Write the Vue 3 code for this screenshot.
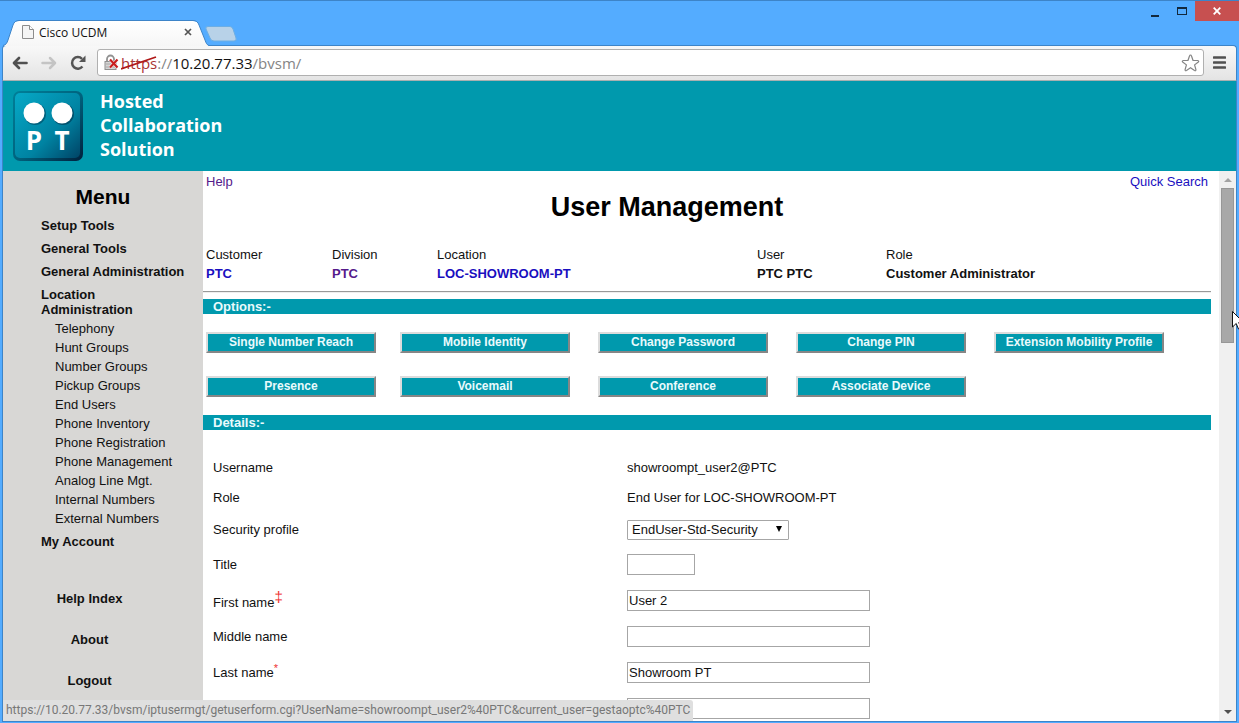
<script setup>
import { ref } from 'vue'

const subItems = [
  'Telephony', 'Hunt Groups', 'Number Groups', 'Pickup Groups', 'End Users',
  'Phone Inventory', 'Phone Registration', 'Phone Management',
  'Analog Line Mgt.', 'Internal Numbers', 'External Numbers',
]
const options = [
  'Single Number Reach', 'Mobile Identity', 'Change Password', 'Change PIN',
  'Extension Mobility Profile', 'Presence', 'Voicemail', 'Conference', 'Associate Device',
]
const url = ref('')
const profile = ref('EndUser-Std-Security')
const title = ref('')
const firstName = ref('User 2')
const middleName = ref('')
const lastName = ref('Showroom PT')
const extra = ref('')
</script>

<template>
  <div class="window">
    <header class="titlebar">
      <div class="tab">
        <svg class="tab-shape" width="206" height="26" viewBox="0 0 206 26">
          <defs>
            <linearGradient id="tabFill" x1="0" y1="0" x2="0" y2="1">
              <stop offset="0" stop-color="#ffffff" />
              <stop offset="1" stop-color="#f6f6f6" />
            </linearGradient>
          </defs>
          <path d="M0 26 C3 25 4 23 5 20 L10 5 C11 2 13 1 16 1 H190 C193 1 195 2 196 5 L202 20 C203 23 204 25 206 26 Z" fill="url(#tabFill)" />
          <path d="M0 25.500 C3 25 4 23 5 20 L10 5 C11 2 13 .5 16 .5 H190 C193 .5 195 2 196 5 L202 20 C203 23 204 25 206 25.500" fill="none" stroke="#3d84c8" />
        </svg>
        <svg class="page-icon" width="12" height="14" viewBox="0 0 12 14">
          <path d="M.5 .5 H7.500 L11.500 4.500 V13.500 H.5 Z" fill="#f4f4f4" stroke="#8c8c8c" />
          <path d="M7.500 .5 V4.500 H11.500" fill="#fff" stroke="#8c8c8c" />
        </svg>
        <span class="tab-title">Cisco UCDM</span>
        <button class="tab-close" type="button" aria-label="Close tab">
          <svg width="8" height="8" viewBox="0 0 8 8"><path d="M1 1 L7 7 M7 1 L1 7" stroke="#555" stroke-width="1.700" /></svg>
        </button>
      </div>
      <button class="new-tab" type="button" aria-label="New tab">
        <svg width="32" height="16" viewBox="0 0 32 16">
          <path d="M3 .5 H25 Q27 .5 28 3 L31 12 Q32 15 29 15 H9 Q6 15 5 12 L1 3 Q0 .5 3 .5 Z" fill="#b8d2e8" stroke="#6daee4" />
        </svg>
      </button>
      <div class="controls">
        <button type="button" aria-label="Minimize"><svg width="8" height="14" viewBox="0 0 8 14"><path d="M0 11 H8 V13 H0 Z" fill="#13293d" /></svg></button>
        <button type="button" aria-label="Maximize"><svg width="10" height="12" viewBox="0 0 10 12"><path d="M0 2 H10 V10 H0 Z M1 4 V9 H9 V4 Z" fill="#13293d" fill-rule="evenodd" /></svg></button>
        <button type="button" class="close" aria-label="Close"><svg width="8" height="8" viewBox="0 0 8 8"><path d="M.7 .7 L7.300 7.300 M7.300 .7 L.7 7.300" stroke="#fff" stroke-width="1.800" /></svg></button>
      </div>
    </header>

    <nav class="toolbar">
      <button class="tool" type="button" aria-label="Back">
        <svg width="16" height="14" viewBox="0 0 16 14"><path d="M14.500 7 H2.500 M7 2 L2 7 L7 12" fill="none" stroke="#505050" stroke-width="2.700" stroke-linecap="round" stroke-linejoin="round" /></svg>
      </button>
      <button class="tool" type="button" aria-label="Forward">
        <svg width="16" height="14" viewBox="0 0 16 14"><path d="M1.500 7 H13.500 M9 2 L14 7 L9 12" fill="none" stroke="#c4c4c4" stroke-width="2.500" stroke-linecap="round" stroke-linejoin="round" /></svg>
      </button>
      <button class="tool" type="button" aria-label="Reload">
        <svg width="16" height="16" viewBox="0 0 16 16"><path d="M12.400 11.500 A5.800 5.800 0 1 1 12 3.800" fill="none" stroke="#555" stroke-width="2.500" /><path d="M15.500 .5 V7 H9 Z" fill="#555" /></svg>
      </button>
      <div class="address">
        <svg class="lock" width="15" height="17" viewBox="0 0 15 17">
          <path d="M3 8 V5 A3.500 3.500 0 0 1 10 5 V8" fill="none" stroke="#929292" stroke-width="1.800" />
          <rect x="1" y="7.500" width="11" height="8" fill="#d5d5d5" stroke="#909090" />
          <path d="M2 10 H11 M2 13 H11" stroke="#aaa" />
          <path d="M6 5.500 L13.500 13.500 M13.500 5.500 L6 13.500" stroke="#fff" stroke-width="3.200" />
          <path d="M6 5.500 L13.500 13.500 M13.500 5.500 L6 13.500" stroke="#c81e1e" stroke-width="2.200" />
        </svg>
        <div class="url-text">
          <span class="scheme">https<svg class="strike" width="36" height="14" viewBox="0 0 36 14"><path d="M0 13 L35 1" stroke="#b01818" stroke-width="1.800" /></svg></span><span>://</span><b>10.20.77.33</b><span>/bvsm/</span>
        </div>
        <input v-model="url" class="url-input" type="text" aria-label="Address">
        <button class="star" type="button" aria-label="Bookmark">
          <svg width="19" height="18" viewBox="0 0 19 18"><path d="M9.500 1 Q10.200 1 10.500 2 L12 6.300 L16.800 6.500 Q18.300 6.900 17.300 8 L13.600 10.900 L14.900 15.600 Q15 17.200 13.500 16.500 L9.500 13.800 L5.500 16.500 Q4 17.200 4.100 15.600 L5.400 10.900 L1.700 8 Q.7 6.900 2.200 6.500 L7 6.300 L8.500 2 Q8.800 1 9.500 1 Z" fill="#fff" stroke="#858585" stroke-width="1.200" /></svg>
        </button>
      </div>
      <button class="menu-btn" type="button" aria-label="Browser menu">
        <svg width="13" height="13" viewBox="0 0 13 13"><path d="M1 1.500 H12 M1 6.500 H12 M1 11.500 H12" stroke="#505050" stroke-width="2.600" stroke-linecap="round" /></svg>
      </button>
    </nav>

    <div class="banner">
      <svg width="70" height="70" viewBox="0 0 70 70" role="img" aria-label="PT">
        <defs>
          <linearGradient id="logoFill" x1="0" y1="0" x2="1" y2="1">
            <stop offset="0" stop-color="#06a8c6" />
            <stop offset=".6" stop-color="#0083a2" />
            <stop offset="1" stop-color="#004466" />
          </linearGradient>
          <linearGradient id="logoEdge" x1="0" y1="0" x2="1" y2="1">
            <stop offset="0" stop-color="#007f98" />
            <stop offset=".5" stop-color="#00647f" />
            <stop offset="1" stop-color="#00203c" />
          </linearGradient>
        </defs>
        <rect x="0" y="0" width="70" height="70" rx="7" fill="url(#logoEdge)" />
        <rect x="2" y="2" width="65" height="65" rx="5" fill="url(#logoFill)" />
        <circle cx="22" cy="23" r="11" fill="#00627e" />
        <circle cx="50" cy="23" r="11" fill="#00526e" />
        <circle cx="21" cy="22" r="10.500" fill="#fff" />
        <circle cx="49" cy="22" r="10.500" fill="#fff" />
        <g class="logo-text" text-anchor="middle">
          <text x="21" y="59" fill="#fff">P</text>
          <text x="49" y="59" fill="#fff">T</text>
        </g>
      </svg>
      <div class="brand">Hosted<br>Collaboration<br>Solution</div>
    </div>

    <div class="page">
      <aside class="sidebar">
        <h2>Menu</h2>
        <ul class="menu">
          <li><a href="#">Setup Tools</a></li>
          <li><a href="#">General Tools</a></li>
          <li><a href="#">General Administration</a></li>
          <li>
            <a href="#">Location<br>Administration</a>
            <ul class="sub">
              <li v-for="s in subItems" :key="s"><a href="#">{{ s }}</a></li>
            </ul>
          </li>
          <li><a href="#">My Account</a></li>
        </ul>
        <div class="side-links">
          <a href="#">Help Index</a>
          <a href="#">About</a>
          <a href="#">Logout</a>
        </div>
      </aside>

      <main class="content">
        <div class="top-links">
          <a href="#" class="visited">Help</a>
          <a href="#">Quick Search</a>
        </div>
        <h1>User Management</h1>
        <table class="info">
          <thead>
            <tr>
              <th class="c1">Customer</th><th class="c2">Division</th><th class="c3">Location</th><th class="c4">User</th><th>Role</th>
            </tr>
          </thead>
          <tbody>
            <tr>
              <td><a href="#">PTC</a></td>
              <td><a href="#" class="visited">PTC</a></td>
              <td><a href="#">LOC-SHOWROOM-PT</a></td>
              <td>PTC PTC</td>
              <td>Customer Administrator</td>
            </tr>
          </tbody>
        </table>
        <hr>
        <h3>Options:-</h3>
        <div class="options">
          <button v-for="o in options" :key="o" type="button">{{ o }}</button>
        </div>
        <h3>Details:-</h3>
        <form class="details" @submit.prevent>
          <div class="row short"><span>Username</span><span>showroompt_user2@PTC</span></div>
          <div class="row short"><span>Role</span><span>End User for LOC-SHOWROOM-PT</span></div>
          <div class="row medium">
            <label for="profile">Security profile</label>
            <div class="select">
              <select id="profile" v-model="profile"><option>EndUser-Std-Security</option></select>
              <svg width="6" height="6" viewBox="0 0 6 6"><path d="M0 0 H6 L3 6 Z" fill="#000" /></svg>
            </div>
          </div>
          <div class="row medium"><label for="title">Title</label><input id="title" v-model="title" class="small" type="text"></div>
          <div class="row"><label for="first">First name<sup class="dagger">‡</sup></label><input id="first" v-model="firstName" type="text"></div>
          <div class="row"><label for="middle">Middle name</label><input id="middle" v-model="middleName" type="text"></div>
          <div class="row"><label for="last">Last name<sup>*</sup></label><input id="last" v-model="lastName" type="text"></div>
          <div class="row"><span></span><input v-model="extra" type="text" aria-label="Email"></div>
        </form>
      </main>

      <div class="scrollbar">
        <svg width="8" height="4" viewBox="0 0 8 4"><path d="M0 4 L4 0 L8 4 Z" fill="#a3a3a3" /></svg>
        <div class="track"><div class="thumb"></div></div>
        <svg width="8" height="4" viewBox="0 0 8 4"><path d="M0 0 L4 4 L8 0 Z" fill="#505050" /></svg>
      </div>

      <div class="status">https://10.20.77.33/bvsm/iptusermgt/getuserform.cgi?UserName=showroompt_user2%40PTC&amp;current_user=gestaoptc%40PTC</div>
    </div>

    <svg class="cursor" width="12" height="19" viewBox="0 0 12 19">
      <path d="M.5 .5 V16 L4.200 12.500 L6.500 18 L9 17 L6.700 11.500 H11.500 Z" fill="#fff" stroke="#111" />
    </svg>
  </div>
</template>

<style>
html, body {
  margin: 0;
  overflow: hidden;
}
</style>

<style scoped>
* {
  box-sizing: border-box;
}
.window {
  position: relative;
  display: flex;
  flex-direction: column;
  height: 100vh;
  padding: 0 2px 1px;
  overflow: hidden;
  background: #54acff;
  border-top: 1px solid #3d84c8;
  font-family: "Liberation Sans", Arial, sans-serif;
  font-size: 13px;
  line-height: 15px;
  color: #111;
}
button {
  display: flex;
  align-items: center;
  justify-content: center;
  padding: 0;
  border: 0;
  background: none;
  font: inherit;
}
a {
  color: #1a0fc0;
  text-decoration: none;
}
a.visited {
  color: #551a8b;
}

.titlebar {
  display: flex;
  flex: none;
  align-items: flex-end;
  height: 44px;
}
.tab {
  position: relative;
  z-index: 1;
  display: flex;
  align-items: center;
  width: 206px;
  height: 26px;
  padding: 0 15px 2px 19px;
  margin-bottom: -1px;
  margin-left: 1px;
}
.tab-shape {
  position: absolute;
  inset: 0;
}
.page-icon,
.tab-title,
.tab-close {
  position: relative;
}
.tab-title {
  flex: 1;
  margin-left: 5px;
  font-family: "Open Sans", sans-serif;
  font-size: 12px;
}
.tab-close {
  width: 12px;
  height: 12px;
}
.new-tab {
  align-self: flex-end;
  margin-bottom: 3px;
  margin-left: -4px;
}
.controls {
  display: flex;
  align-self: flex-start;
  height: 20px;
  margin-right: -2px;
  margin-left: auto;
}
.controls button {
  width: 27px;
}
.controls .close {
  width: 44px;
  background: #c75050;
}

.toolbar {
  display: flex;
  flex: none;
  align-items: center;
  gap: 13px;
  height: 36px;
  padding: 0 10px 1px 9px;
  background: linear-gradient(#f8f8f8, #e4e4e4);
  border: 1px solid #3d84c8;
  border-bottom-color: #a9b0b0;
  border-radius: 4px 4px 0 0;
}
.tool {
  width: 16px;
  height: 16px;
}
.address {
  position: relative;
  display: flex;
  flex: 1;
  align-items: center;
  height: 27px;
  padding: 0 3px 0 6px;
  margin-left: -2px;
  background: #fff;
  border: 1px solid #b0b0b0;
  border-radius: 3px;
}
.url-text {
  margin-left: 2px;
  font-family: "Open Sans", sans-serif;
  font-size: 15px;
  line-height: 20px;
  color: #858585;
}
.url-text b {
  font-weight: 400;
  color: #111;
}
.scheme {
  position: relative;
  color: #a33;
}
.strike {
  position: absolute;
  top: 3px;
  left: 0;
}
.url-input {
  flex: 1;
  min-width: 0;
  border: 0;
  background: transparent;
}
.menu-btn {
  width: 13px;
  margin-left: -4px;
}

.banner {
  display: flex;
  flex: none;
  align-items: center;
  gap: 17px;
  height: 90px;
  padding-left: 10px;
  background: #0099ad;
  border: solid #3d84c8;
  border-width: 0 1px;
}
.brand {
  padding-bottom: 2px;
  font-family: "Open Sans", sans-serif;
  font-size: 18px;
  font-weight: 700;
  line-height: 24px;
  color: #fff;
}
.logo-text {
  font-family: "Open Sans", sans-serif;
  font-size: 26px;
  font-weight: 700;
}

.page {
  position: relative;
  display: flex;
  flex: 1;
  min-height: 0;
  overflow: hidden;
  background: #fff;
  border: solid #3d84c8;
  border-width: 0 1px 1px;
}
.sidebar {
  flex: none;
  width: 200px;
  background: #d8d7d5;
}
.sidebar a {
  color: #111;
}
.sidebar h2 {
  margin: 14px 0 13px;
  font-size: 21px;
  line-height: 24px;
  text-align: center;
  color: #000;
}
.menu,
.sub {
  padding: 0;
  margin: 0;
  list-style: none;
}
.menu {
  padding-left: 38px;
  font-weight: 700;
}
.menu > li {
  margin-top: -4px;
  margin-bottom: 12px;
}
.sub {
  padding: 2px 0 0 14px;
  margin-bottom: -6px;
  font-weight: 400;
  line-height: 19px;
}
.side-links {
  display: flex;
  flex-direction: column;
  align-items: center;
  gap: 26px;
  width: 173px;
  padding-top: 30px;
  font-weight: 700;
}

.content {
  flex: 1;
  min-width: 0;
  padding-right: 8px;
}
.top-links {
  display: flex;
  justify-content: space-between;
  padding: 3px 3px 0;
}
h1 {
  padding-right: 80px;
  margin: 3px 0 23px;
  font-size: 27px;
  line-height: 30px;
  text-align: center;
  color: #000;
}
.info {
  width: 100%;
  table-layout: fixed;
  border-spacing: 0;
  line-height: 19px;
}
.info th,
.info td {
  padding: 0 0 0 3px;
  text-align: left;
}
.info th {
  font-weight: 400;
}
.info td {
  font-weight: 700;
}
.c1 { width: 126px; }
.c2 { width: 105px; }
.c3 { width: 320px; }
.c4 { width: 129px; }
hr {
  height: 2px;
  margin: 8px 0 6px;
  border: 0;
  border-top: 1px solid #999;
  border-bottom: 1px solid #eee;
}
h3 {
  padding-left: 10px;
  margin: 0;
  font-size: 13px;
  line-height: 15px;
  color: #e9fafc;
  background: #0099ad;
}
.options {
  display: grid;
  grid-template-columns: 194px 198px 198px 198px 170px;
  row-gap: 23px;
  padding: 18px 0 18px 3px;
}
.options button {
  width: 170px;
  height: 21px;
  border: 2px solid;
  border-color: #dcdcdc #868686 #868686 #dcdcdc;
  font-size: 12px;
  font-weight: 700;
  color: #e9fafc;
  background: #0099ad;
}
.details {
  padding-top: 22px;
}
.row {
  display: grid;
  grid-template-columns: 414px 1fr;
  align-items: center;
  height: 36px;
  padding-left: 10px;
}
.row.short {
  height: 30px;
}
.row.medium {
  height: 35px;
}
.row input,
select {
  width: 243px;
  height: 21px;
  padding: 0 1px;
  border: 1px solid #a6a6a6;
  font: inherit;
  color: #111;
  background: #fff;
}
.row .small {
  width: 68px;
}
.select {
  position: relative;
  width: 162px;
}
.select select {
  display: block;
  width: 162px;
  height: 20px;
  padding: 0 4px;
  border-radius: 1px;
  appearance: none;
}
.select svg {
  position: absolute;
  top: 6px;
  right: 7px;
}
sup {
  font-size: 11px;
  line-height: 0;
  color: #e33;
}
.dagger {
  font-size: 15px;
  line-height: 15px;
}

.scrollbar {
  display: flex;
  flex: none;
  flex-direction: column;
  align-items: center;
  width: 17px;
  padding: 7px 0;
  background: #f0f0f0;
}
.track {
  flex: 1;
  width: 13px;
  margin: 6px 0;
}
.thumb {
  height: 30%;
  background: #a8a8a8;
  border: 1px solid #979797;
}
.status {
  position: absolute;
  bottom: 0;
  left: 0;
  height: 21px;
  padding: 0 3px;
  font-family: Roboto, "Open Sans", sans-serif;
  font-size: 12px;
  line-height: 21px;
  color: #777;
  background: #dfdfdf;
  border-radius: 0 3px 0 0;
}
.cursor {
  position: absolute;
  top: 310px;
  right: -5px;
}
</style>
